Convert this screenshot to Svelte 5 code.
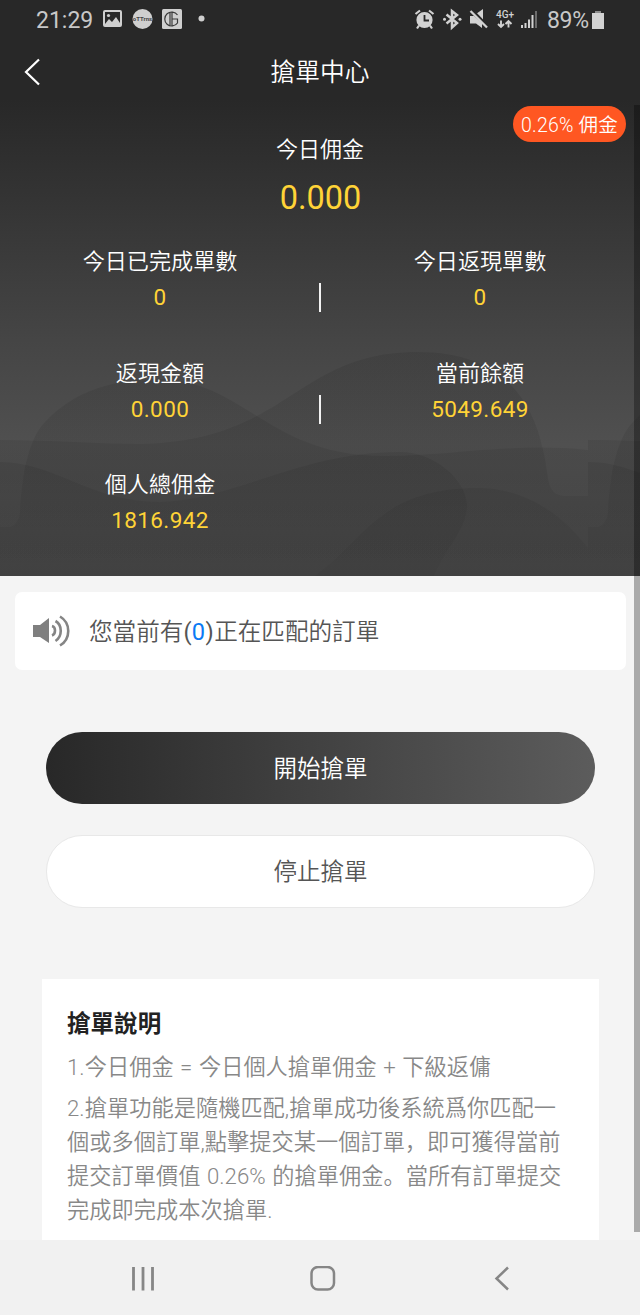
<script lang="ts">
  interface Stat {
    label: string;
    value: string;
  }

  const rate = '0.26%';
  const matching = 0;

  const rows: Stat[][] = [
    [
      { label: '今日已完成單數', value: '0' },
      { label: '今日返現單數', value: '0' }
    ],
    [
      { label: '返現金額', value: '0.000' },
      { label: '當前餘額', value: '5049.649' }
    ],
    [{ label: '個人總佣金', value: '1816.942' }]
  ];

  let running = $state(false);
</script>

<div class="screen">
  <header class="hero">
    <svg class="waves" viewBox="0 0 640 576" aria-hidden="true">
      <defs>
        <linearGradient id="shade" gradientUnits="userSpaceOnUse" x1="0" y1="350" x2="0" y2="576">
          <stop offset="0" stop-color="#000" stop-opacity="0.08" />
          <stop offset="0.5" stop-color="#000" stop-opacity="0.07" />
          <stop offset="1" stop-color="#000" stop-opacity="0.03" />
        </linearGradient>
        <g id="tile" fill="url(#shade)">
          <path d="M0 527H10Q19 524 20 512C22 475 28 440 45 422C75 390 115 379 160 379C245 381 268 456 385 456C450 456 515 442 588 450V576H0Z" />
          <path d="M0 440C50 440 100 444 140 444C290 441 295 352 418 352C500 352 532 398 543 450C550 478 545 494 564 496H588V576H0Z" />
          <path d="M0 462C55 462 90 502 160 502C235 500 300 452 400 452C435 452 466 480 467 505C467 530 444 550 434 576H0Z" />
          <path d="M315 576C365 540 380 488 478 488C525 488 562 514 588 548V576Z" />
        </g>
      </defs>
      <use href="#tile" />
      <use href="#tile" x="588" />
    </svg>

    <div class="status">
      <span class="clock">21:29</span>
      <svg class="left-icons" width="120" height="24" viewBox="0 0 120 24">
        <path fill="#cfcfcf" fill-rule="evenodd" d="M5 2H20Q22 2 22 4V17Q22 19 20 19H5Q3 19 3 17V4Q3 2 5 2ZM5 4V16L9 11L12 14L16 9L20 15V4Z" />
        <circle cx="8.500" cy="7.500" r="1.600" fill="#cfcfcf" />
        <circle cx="42.500" cy="11" r="10" fill="#cfcfcf" />
        <text x="42.500" y="13" text-anchor="middle" font-size="6" font-weight="700" fill="#444">oTTrns</text>
        <rect x="62" y="1" width="20" height="20" rx="1.500" fill="#cfcfcf" />
        <path d="M77.500 7A7 7 0 1 0 77.500 15V11H72M72 4V18M70 4V18" fill="none" stroke="#3a3a3a" stroke-width="1.200" />
        <circle cx="101.500" cy="10.500" r="3" fill="#cfcfcf" />
      </svg>
      <svg class="right-icons" width="130" height="24" viewBox="0 0 130 24">
        <g fill="none" stroke="#d2d2d2" stroke-width="2.200">
          <circle cx="10.500" cy="12" r="7" fill="#d2d2d2" />
          <path d="M1.500 6L6 2.500M19.500 6L15 2.500M5 17.500L3 20.500M16 17.500L18 20.500" />
          <path d="M10.500 7V12.500H15" stroke="#282828" stroke-width="1.800" />
          <path d="M32.500 6.500L43 15L38 19.500V3L43 7L32.500 15.500" stroke-width="2.500" />
        </g>
        <g fill="#d2d2d2">
          <circle cx="30.500" cy="11.200" r="1.500" />
          <circle cx="46" cy="11.200" r="1.500" />
          <path d="M56 8H60L68 15V20L62 15.500H56ZM62 6L69 1V13Z" />
        </g>
        <path d="M58 1.500L74 18" stroke="#282828" stroke-width="2" />
        <path d="M56.500 3L73 19.500" stroke="#d2d2d2" stroke-width="2.300" />
        <text x="82" y="9.500" font-size="10" font-weight="500" fill="#d2d2d2">4G+</text>
        <path d="M87 12.500V18.500M84 16L87 19L90 16M94.500 19.500V13.500M91.500 16L94.500 13L97.500 16" fill="none" stroke="#d2d2d2" stroke-width="1.900" />
        <g fill="#d2d2d2">
          <rect x="107" y="17" width="2" height="3" />
          <rect x="110.500" y="15" width="2" height="5" />
          <rect x="114" y="11.500" width="2" height="8.500" />
          <rect x="117.500" y="7" width="2" height="13" />
          <rect x="121" y="3" width="2" height="17" opacity="0.4" />
        </g>
      </svg>
      <span class="percent">89%</span>
      <svg width="14" height="20" viewBox="0 0 14 20">
        <path d="M1 3H13V19H1Z" fill="#d2d2d2" />
        <path d="M4 1H10V3H4Z" fill="#8c8c8c" />
      </svg>
    </div>

    <div class="titlebar">
      <button type="button" class="back" aria-label="返回">
        <svg width="20" height="30" viewBox="0 0 20 30">
          <path d="M16 2.500L3 15L16 27.500" fill="none" stroke="#fff" stroke-width="2.200" />
        </svg>
      </button>
      <h1>搶單中心</h1>
    </div>

    <span class="badge">{rate} 佣金</span>

    <div class="today">
      <p>今日佣金</p>
      <strong>0.000</strong>
    </div>

    <div class="stats">
      {#each rows as row}
        <div class="row" class:split={row.length > 1}>
          {#each row as stat (stat.label)}
            <div class="stat">
              <p>{stat.label}</p>
              <span>{stat.value}</span>
            </div>
          {/each}
        </div>
      {/each}
    </div>
  </header>

  <main>
    <div class="notice">
      <svg width="38" height="32" viewBox="0 0 38 32">
        <path d="M0 10H7L16 3V28L7 22H0Z" fill="#7f7f7f" />
        <g fill="none" stroke="#858585" stroke-width="2.600">
          <path d="M19 11C23 12 23 19 19 20.500" />
          <path d="M22.500 6C29.500 10 29.500 21.500 22.500 26" />
          <path d="M27 1.500C38 8 38 24 27 30.500" />
        </g>
      </svg>
      <p>您當前有<span>(<em>{matching}</em>)</span>正在匹配的訂單</p>
    </div>

    <div class="actions">
      <button type="button" class="start" onclick={() => (running = true)} disabled={running}>開始搶單</button>
      <button type="button" class="stop" onclick={() => (running = false)}>停止搶單</button>
    </div>

    <section class="rules">
      <h2>搶單說明</h2>
      <p>1.今日佣金 = 今日個人搶單佣金 + 下級返傭</p>
      <p>2.搶單功能是隨機匹配,搶單成功後系統爲你匹配一個或多個訂單,點擊提交某一個訂單，即可獲得當前提交訂單價值 {rate} 的搶單佣金。當所有訂單提交完成即完成本次搶單.</p>
    </section>
  </main>

  <nav>
    <svg width="24" height="26" viewBox="0 0 24 26">
      <path d="M2.500 1V24.500M12 1V24.500M21.500 1V24.500" stroke="#868686" stroke-width="2.800" />
    </svg>
    <svg width="26" height="26" viewBox="0 0 26 26">
      <rect x="1.500" y="1" width="22.500" height="22.500" rx="6.500" fill="none" stroke="#868686" stroke-width="2.500" />
    </svg>
    <svg width="16" height="26" viewBox="0 0 16 26">
      <path d="M14 1.500L2.500 12.500L14 23.500" fill="none" stroke="#868686" stroke-width="2.500" />
    </svg>
  </nav>

  <div class="scrollbar"></div>
</div>

<style>
  :global(body) {
    background: #f4f4f4;
  }

  .screen {
    position: relative;
    display: flex;
    flex-direction: column;
    width: 640px;
    height: 1315px;
    overflow: hidden;
    font-family: Roboto, 'Noto Sans CJK SC', sans-serif;
    font-weight: 350;
    background: #f4f4f4;
  }

  svg {
    display: block;
    flex: none;
  }

  p,
  h1,
  h2 {
    margin: 0;
  }

  button {
    padding: 0;
    border: 0;
    font: inherit;
    cursor: pointer;
  }

  .hero {
    position: relative;
    height: 576px;
    flex: none;
    color: #fff;
    background: linear-gradient(#282828 100px, #454545 340px, #505050 445px, #474747 576px);
  }

  .waves {
    position: absolute;
    inset: 0;
    width: 640px;
    height: 576px;
  }

  .status {
    position: relative;
    display: flex;
    align-items: center;
    height: 40px;
    padding: 0 35px 0 36px;
    color: #c8c8c8;
    font-size: 23px;
    font-weight: 400;
  }

  .left-icons {
    margin-left: 7px;
  }

  .right-icons {
    margin-left: auto;
  }

  .percent {
    margin: 0 2px 0 3px;
    letter-spacing: -0.200px;
  }

  .titlebar {
    position: relative;
    display: grid;
    grid-template-columns: 60px 1fr 60px;
    align-items: center;
    height: 63px;
  }

  .back {
    padding-left: 23px;
    background: none;
  }

  h1 {
    padding-top: 3px;
    font-size: 24.700px;
    font-weight: 350;
    line-height: 36px;
    text-align: center;
  }

  .badge {
    position: absolute;
    top: 106px;
    right: 14px;
    width: 113px;
    height: 36px;
    border-radius: 18px;
    background: #ff5722;
    font-size: 19.500px;
    letter-spacing: 0.200px;
    line-height: 39px;
    text-align: center;
    white-space: nowrap;
  }

  .today {
    position: relative;
    padding-top: 31px;
    text-align: center;
  }

  .today p {
    font-size: 22px;
    line-height: 32px;
  }

  .today strong {
    display: block;
    margin: 12px 0 0 1px;
    color: #ffd337;
    font-size: 32.500px;
    font-weight: 400;
    line-height: 40px;
  }

  .stats {
    position: relative;
    display: flex;
    flex-direction: column;
    gap: 39.500px;
    padding-top: 26px;
  }

  .row {
    position: relative;
    display: grid;
    grid-template-columns: 1fr 1fr;
  }

  .row.split::after {
    content: '';
    position: absolute;
    left: 319px;
    top: 39px;
    width: 1.500px;
    height: 29px;
    background: #f2f2f2;
  }

  .stat {
    text-align: center;
    font-size: 22.100px;
    line-height: 35px;
  }

  .stat span {
    display: block;
    color: #ffd337;
    font-size: 22.500px;
    font-weight: 400;
    letter-spacing: 0.400px;
    line-height: 37px;
  }

  main {
    flex: 1;
    display: flex;
    flex-direction: column;
    min-height: 0;
    padding-top: 16px;
  }

  .notice {
    display: flex;
    align-items: center;
    gap: 18px;
    height: 78px;
    margin: 0 14px 0 15px;
    padding-left: 18px;
    box-sizing: border-box;
    border-radius: 7px;
    background: #fff;
    color: #555;
    font-size: 23.600px;
  }

  .notice p {
    padding-bottom: 3px;
  }

  /* Roboto has no 350 cut and would drop to light here */
  .notice span {
    font-weight: 400;
    letter-spacing: 0.400px;
  }

  .notice em {
    color: #0a7af5;
    font-style: normal;
  }

  .actions {
    display: flex;
    flex-direction: column;
    gap: 31px;
    padding: 62px 45px 0 46px;
  }

  .actions button {
    height: 72px;
    padding-bottom: 3px;
    border-radius: 36px;
    font-size: 23.500px;
  }

  .start {
    background: linear-gradient(90deg, #282828, #5c5c5c);
    color: #fff;
  }

  .actions .stop {
    height: 73px;
    border: 1px solid #e8e8e8;
    background: #fff;
    color: #555;
  }

  .rules {
    flex: 1;
    margin: 71px 41px 0 42px;
    padding: 28px 25px 0;
    background: #fff;
    color: #888;
    font-size: 22.200px;
    letter-spacing: 0.050px;
    line-height: 34px;
    word-spacing: 1px;
  }

  .rules h2 {
    margin-bottom: 9px;
    color: #222;
    font-size: 23.500px;
    font-weight: 700;
    line-height: 34px;
  }

  .rules p + p {
    margin-top: 7px;
  }

  nav {
    display: flex;
    align-items: center;
    justify-content: space-between;
    height: 75px;
    flex: none;
    box-sizing: border-box;
    padding: 2px 130px 0 131px;
    background: #f1f1f1;
  }

  nav svg:nth-child(2) {
    margin-right: 4px;
  }

  .scrollbar {
    position: absolute;
    top: 105px;
    right: 0;
    width: 6.500px;
    height: 1127px;
    background: rgba(0, 0, 0, 0.3);
  }
</style>
